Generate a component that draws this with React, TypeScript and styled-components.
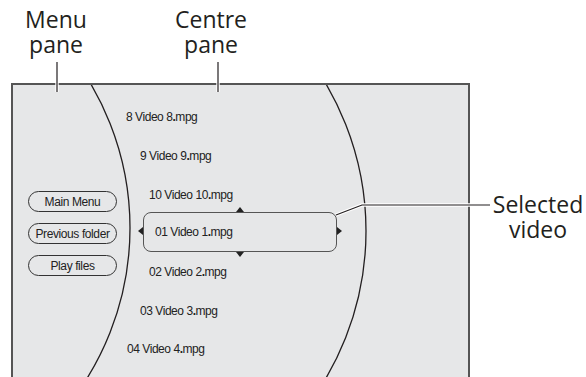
import React from "react";
import styled, { createGlobalStyle } from "styled-components";

const items = [
  { name: "8 Video 8", indent: 9 },
  { name: "9 Video 9", indent: 23 },
  { name: "10 Video 10", indent: 32 },
  { name: "01 Video 1", indent: 26, selected: true },
  { name: "02 Video 2", indent: 32 },
  { name: "03 Video 3", indent: 23 },
  { name: "04 Video 4", indent: 10 },
];

const menuButtons = ["Main Menu", "Previous folder", "Play files"];

const FileName = ({ name }: { name: string }) => (
  <>
    {name}
    <Dot>.</Dot>mpg
  </>
);

const App = () => {
  return (
    <>
      <GlobalStyle />
      <Page>
        <LabelRow>
          <Callout $width={90}>
            Menu
            <br />
            pane
          </Callout>
          <Callout $width={120}>
            Centre
            <br />
            pane
          </Callout>
        </LabelRow>
        <ScreenRow>
          <Panel>
            <Arcs width="455" height="306">
              <circle cx="-167" cy="143" r="284" />
              <circle cx="63" cy="146" r="290" />
            </Arcs>
            <MenuColumn>
              {menuButtons.map((label) => (
                <MenuButton key={label}>{label}</MenuButton>
              ))}
            </MenuColumn>
            <FileList>
              {items.map((item) => (
                <FileRow key={item.name} $indent={item.indent}>
                  {item.selected ? (
                    <SelectedBox>
                      <Arrow $side="top" />
                      <Arrow $side="bottom" />
                      <Arrow $side="left" />
                      <Arrow $side="right" />
                      <FileName name={item.name} />
                    </SelectedBox>
                  ) : (
                    <FileName name={item.name} />
                  )}
                </FileRow>
              ))}
            </FileList>
          </Panel>
          <SideCallout>
            Selected
            <br />
            video
          </SideCallout>
        </ScreenRow>
        <Leaders width="586" height="377">
          <g stroke="#fff" strokeWidth="3.4" fill="none">
            <line x1="57" y1="62" x2="57" y2="92" />
            <line x1="218" y1="62" x2="218" y2="92" />
            <polyline points="336,215 362,205 490,205" />
          </g>
          <g stroke="#231f20" strokeWidth="1.2" fill="none">
            <line x1="57" y1="62" x2="57" y2="92" />
            <line x1="218" y1="62" x2="218" y2="92" />
            <polyline points="336,215 362,205 490,205" />
          </g>
        </Leaders>
      </Page>
    </>
  );
};

export default App;

const GlobalStyle = createGlobalStyle`
  body {
    margin: 0;
    background: #fff;
  }
`;

const Page = styled.div`
  position: relative;
  width: 586px;
  height: 377px;
  overflow: hidden;
  background: #fff;
`;

const LabelRow = styled.div`
  display: flex;
  gap: 50px;
  height: 83px;
  box-sizing: border-box;
  padding: 7px 0 0 11px;
`;

const Callout = styled.div<{ $width: number }>`
  width: ${(props) => props.$width}px;
  text-align: center;
  font-family: "Open Sans", sans-serif;
  font-size: 23px;
  line-height: 25px;
  color: #231f20;
`;

const ScreenRow = styled.div`
  display: flex;
  align-items: flex-start;
`;

const Panel = styled.div`
  position: relative;
  display: flex;
  margin-left: 11px;
  width: 459px;
  height: 310px;
  box-sizing: border-box;
  border: 2px solid #555;
  border-bottom: none;
  background: #e6e7e8;
  overflow: hidden;
`;

const Arcs = styled.svg`
  position: absolute;
  top: 0;
  left: 0;
  fill: none;
  stroke: #231f20;
  stroke-width: 1.3;
`;

const MenuColumn = styled.div`
  position: relative;
  display: flex;
  flex-direction: column;
  gap: 11px;
  width: 104px;
  flex-shrink: 0;
  box-sizing: border-box;
  padding: 106px 0 0 15px;
`;

const MenuButton = styled.div`
  width: 89px;
  height: 21px;
  box-sizing: border-box;
  border: 1px solid #333;
  border-radius: 11px;
  display: flex;
  align-items: center;
  justify-content: center;
  font-family: "Liberation Sans", Arial, sans-serif;
  font-size: 12px;
  letter-spacing: -0.4px;
  color: #222;
`;

const FileList = styled.div`
  position: relative;
  display: flex;
  flex-direction: column;
  padding-top: 13px;
`;

const FileRow = styled.div<{ $indent: number }>`
  display: flex;
  align-items: center;
  height: 38.7px;
  padding-left: ${(props) => props.$indent}px;
  font-family: "Liberation Sans", Arial, sans-serif;
  font-size: 12px;
  letter-spacing: -0.45px;
  color: #222;
  white-space: nowrap;
`;

const Dot = styled.span`
  font-weight: bold;
`;

const SelectedBox = styled.div`
  position: relative;
  display: flex;
  align-items: center;
  width: 194px;
  height: 40px;
  margin-top: -3px;
  box-sizing: border-box;
  padding-left: 11px;
  border: 1px solid #555;
  border-radius: 8px;
`;

const Arrow = styled.span<{ $side: "top" | "bottom" | "left" | "right" }>`
  position: absolute;
  width: 0;
  height: 0;
  ${({ $side }) => {
    switch ($side) {
      case "top":
        return `
          top: -6px; left: 50%; margin-left: -4.5px;
          border-left: 4.5px solid transparent;
          border-right: 4.5px solid transparent;
          border-bottom: 5px solid #222;
        `;
      case "bottom":
        return `
          bottom: -6px; left: 50%; margin-left: -4.5px;
          border-left: 4.5px solid transparent;
          border-right: 4.5px solid transparent;
          border-top: 5px solid #222;
        `;
      case "left":
        return `
          left: -6px; top: 50%; margin-top: -4.5px;
          border-top: 4.5px solid transparent;
          border-bottom: 4.5px solid transparent;
          border-right: 5px solid #222;
        `;
      default:
        return `
          right: -6px; top: 50%; margin-top: -4.5px;
          border-top: 4.5px solid transparent;
          border-bottom: 4.5px solid transparent;
          border-left: 5px solid #222;
        `;
    }
  }}
`;

const SideCallout = styled.div`
  margin: 109px 0 0 20px;
  width: 96px;
  text-align: center;
  font-family: "Open Sans", sans-serif;
  font-size: 23px;
  line-height: 25px;
  color: #231f20;
`;

const Leaders = styled.svg`
  position: absolute;
  top: 0;
  left: 0;
  pointer-events: none;
`;
